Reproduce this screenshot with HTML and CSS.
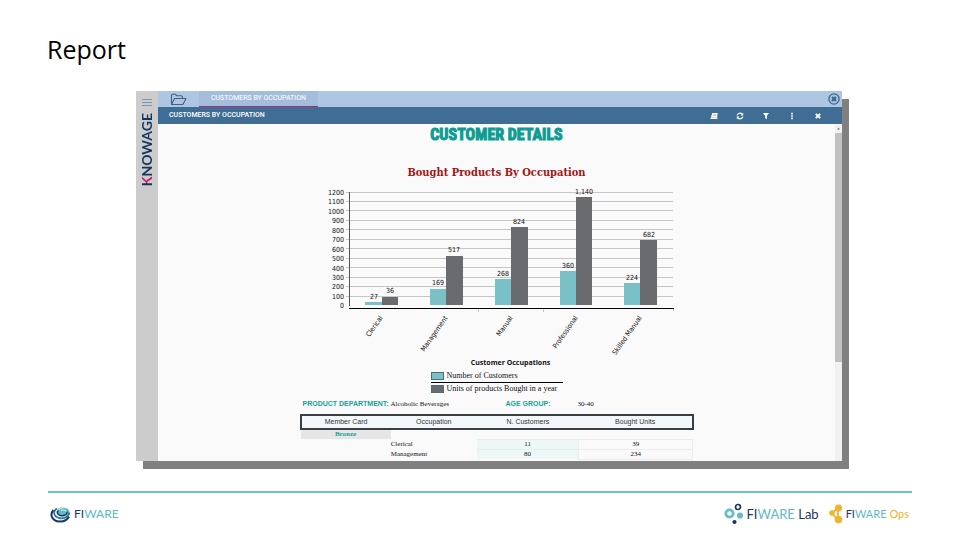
FILE: index.html
```html
<!DOCTYPE html>
<html lang="en">
<head>
<meta charset="utf-8">
<meta name="viewport" content="width=device-width, initial-scale=1">
<title>Report</title>
<link rel="stylesheet" href="styles.css">
</head>
<body>
<main class="slide">
  <h1 class="slide-title">Report</h1>

  <section class="window">
    <nav class="rail">
      <button class="icon-button" type="button" aria-label="Menu">
        <svg width="10" height="9" viewBox="0 0 10 9"><path d="M0 1.5h10M0 4.5h10M0 7.5h10" stroke="#7b97b2" stroke-width="1"/></svg>
      </button>
      <div class="brand"><span class="brand-k">K</span>NOWAGE</div>
    </nav>

    <div class="workspace">
      <div class="tabs">
        <button class="icon-button folder" type="button" aria-label="Open folder">
          <svg width="17" height="13" viewBox="0 0 17 13" fill="none" stroke="#3f6286" stroke-width="1.1" stroke-linejoin="round"><path d="M1.5 11.5V2.2L2.4 1.2H5.6L6.6 2.8H11.6L12.4 3.6V5.5M1.5 11.5L4.6 5.5H16L12.9 11.5Z"/></svg>
        </button>
        <button class="tab" type="button">CUSTOMERS BY OCCUPATION</button>
        <button class="icon-button close-all" type="button" aria-label="Close all">
          <svg width="12" height="12" viewBox="0 0 12 12" fill="none" stroke="#3b668f"><circle cx="6" cy="6" r="5.1" stroke-width="1.3"/><path d="M4 4L8 8M8 4L4 8" stroke-width="2.2"/></svg>
        </button>
      </div>

      <header class="toolbar">
        <h2 class="toolbar-title">CUSTOMERS BY OCCUPATION</h2>
        <div class="actions">
          <button class="icon-button" type="button" aria-label="Online help">
            <svg width="8" height="8" viewBox="0 0 8 8"><path d="M2.2 1H7.8L6.6 5.2H1Z M.8 5.4H6.6L7.3 2.6V6.9H1Q-.1 6.2 .8 5.4Z" fill="#fff"/><path d="M3.3 2.4h2.8M3 3.6h2.8" stroke="#406d93" stroke-width=".4"/></svg>
          </button>
          <button class="icon-button" type="button" aria-label="Refresh">
            <svg width="8" height="8" viewBox="0 0 8 8" fill="none" stroke="#fff" stroke-width="1.2"><path d="M1.2 3.4A2.8 2.8 0 0 1 6 2M6.8 4.6A2.8 2.8 0 0 1 2 6"/><path d="M7.2 .7V3.4H4.5ZM.8 7.3V4.6H3.5Z" fill="#fff" stroke="none"/></svg>
          </button>
          <button class="icon-button" type="button" aria-label="Filter">
            <svg width="8" height="8" viewBox="0 0 8 8"><path d="M1 1H7L4.9 3.8V7.2L3.1 6V3.8Z" fill="#fff"/></svg>
          </button>
          <button class="icon-button" type="button" aria-label="More">
            <svg width="8" height="8" viewBox="0 0 8 8"><path d="M3.2 .8h1.6v1.6H3.2ZM3.2 3.2h1.6v1.6H3.2ZM3.2 5.6h1.6v1.6H3.2Z" fill="#fff"/></svg>
          </button>
          <button class="icon-button" type="button" aria-label="Close">
            <svg width="8" height="8" viewBox="0 0 8 8"><path d="M1.8 1.8L6.2 6.2M6.2 1.8L1.8 6.2" stroke="#fff" stroke-width="1.9"/></svg>
          </button>
        </div>
      </header>

      <div class="viewport">
        <article class="report">
          <h3 class="report-title">CUSTOMER DETAILS</h3>
          <h4 class="chart-title">Bought Products By Occupation</h4>

          <svg class="chart" viewBox="0 0 394 172" role="img" aria-label="Bought Products By Occupation">
            <path class="grid" d="M46 8.5H373M46 17.5H373M46 26.5H373M46 36.5H373M46 45.5H373M46 55.5H373M46 64.5H373M46 74.5H373M46 83.5H373M46 93.5H373M46 102.5H373M46 112.5H373"/>
            <path class="axis-y" d="M49.5 8V122"/>
            <path class="axis-x" d="M49 124.5H374"/>
            <path class="grid" d="M178.5 125v3M243.5 125v3M373.5 125v2"/>
            <g class="tick">
              <text x="44" y="11">1200</text><text x="44" y="20">1100</text><text x="44" y="30">1000</text>
              <text x="44" y="39">900</text><text x="44" y="49">800</text><text x="44" y="58">700</text>
              <text x="44" y="68">600</text><text x="44" y="77">500</text><text x="44" y="87">400</text>
              <text x="44" y="96">300</text><text x="44" y="105">200</text><text x="44" y="115">100</text>
              <text x="44" y="124">0</text>
            </g>
            <g class="bar-customers">
              <rect x="65" y="118" width="17" height="3"/><rect x="130" y="105" width="16" height="16"/>
              <rect x="195" y="95" width="16" height="26"/><rect x="260" y="87" width="16" height="34"/>
              <rect x="324" y="99" width="16" height="22"/>
            </g>
            <g class="bar-units">
              <rect x="82" y="113" width="16" height="8"/><rect x="146" y="72" width="17" height="49"/>
              <rect x="211" y="43" width="17" height="78"/><rect x="276" y="13" width="16" height="108"/>
              <rect x="340" y="56" width="17" height="65"/>
            </g>
            <g class="value">
              <text x="74" y="115">27</text><text x="90" y="109">36</text>
              <text x="138" y="101">169</text><text x="154" y="68">517</text>
              <text x="203" y="92">268</text><text x="219" y="40">824</text>
              <text x="268" y="84">360</text><text x="284" y="10">1,140</text>
              <text x="332" y="96">224</text><text x="349" y="53">682</text>
            </g>
            <g class="category">
              <text transform="translate(83 134) rotate(-55)">Clerical</text>
              <text transform="translate(148 134) rotate(-55)">Management</text>
              <text transform="translate(213 134) rotate(-55)">Manual</text>
              <text transform="translate(278 134) rotate(-55)">Professional</text>
              <text transform="translate(342 134) rotate(-55)">Skilled Manual</text>
            </g>
          </svg>

          <p class="axis-title">Customer Occupations</p>
          <ul class="legend">
            <li><span class="swatch customers"></span>Number of Customers</li>
            <li><span class="swatch units"></span>Units of products Bought in a year</li>
          </ul>

          <dl class="params">
            <dt>PRODUCT DEPARTMENT:</dt><dd>Alcoholic Beverages</dd>
            <dt>AGE GROUP:</dt><dd>30-40</dd>
          </dl>

          <table class="details">
            <colgroup><col class="c1"><col class="c2"><col class="c3"><col class="c4"></colgroup>
            <thead>
              <tr><th>Member Card</th><th>Occupation</th><th>N. Customers</th><th>Bought Units</th></tr>
            </thead>
            <tbody>
              <tr class="group"><th>Bronze</th><td></td><td></td><td></td></tr>
              <tr><td></td><td>Clerical</td><td class="tint">11</td><td class="units-cell">39</td></tr>
              <tr><td></td><td>Management</td><td class="tint">80</td><td class="units-cell">234</td></tr>
            </tbody>
          </table>
        </article>

        <div class="scrollbar">
          <svg width="7" height="9" viewBox="0 0 7 9"><path d="M2 5.500L3.500 3.500L5 5.500Z" fill="#777"/></svg>
          <div class="thumb"></div>
        </div>
      </div>
    </div>
  </section>

  <footer class="footer">
    <div class="logo">
      <svg width="21" height="17" viewBox="0 0 21 17" fill="none">
        <ellipse cx="13" cy="6" rx="6.500" ry="4.700" fill="#63b9c8"/>
        <path d="M11 4.500C14 3 18 5 16 8C14 11 8 10.500 7.500 7C7.500 3 13 .5 17 2" stroke="#fff" stroke-width=".8"/>
        <path d="M7 2.500C2.500 5 3.500 10.500 9 12C14 13.200 19 10.500 19.500 6.500" stroke="#2b7c9c" stroke-width="1.800"/>
        <path d="M3.500 4C-1 9 2.500 15 9.500 15.500C14 15.700 17.500 13.500 19 10.500" stroke="#1b3564" stroke-width="2"/>
        <path d="M8.500 4.500C6 7 8.500 10 12.500 9.700C15.500 9.400 17.500 7.500 17 5.500" stroke="#1b3564" stroke-width="1.500"/>
      </svg>
      <span class="wordmark"><b>FI</b>WARE</span>
    </div>
    <div class="logo-group">
      <div class="logo">
        <svg width="20" height="22" viewBox="0 0 20 22" fill="none">
          <circle cx="5.500" cy="10.500" r="3.700" stroke="#65bdc8" stroke-width="2.800"/>
          <circle cx="14" cy="4" r="2.500" stroke="#1b3564" stroke-width="1.700"/>
          <circle cx="16" cy="12.500" r="3.100" fill="#65bdc8"/>
          <circle cx="10.500" cy="19" r="2.100" fill="#1b3564"/>
        </svg>
        <span class="wordmark large"><b>FI</b>WARE <b>Lab</b></span>
      </div>
      <div class="logo">
        <svg width="14" height="20" viewBox="0 0 14 20">
          <path d="M3 9L9 4V16Z" fill="none" stroke="#f1b22d" stroke-width="1.800"/>
          <circle cx="3" cy="9" r="2.800" fill="#f1b22d"/><circle cx="9.500" cy="4" r="3.500" fill="#f1b22d"/><circle cx="9.500" cy="15.500" r="3.800" fill="#f1b22d"/>
        </svg>
        <span class="wordmark small"><b>FI</b>WARE <i>Ops</i></span>
      </div>
    </div>
  </footer>
</main>
</body>
</html>
```

FILE: styles.css
```css
* { box-sizing: border-box; }

body {
  margin: 0;
  background: #fff;
  color: #111;
  font-family: "Liberation Sans", sans-serif;
}

h1, h2, h3, h4, p, ul, dl, dd { margin: 0; padding: 0; }

button {
  border: 0;
  padding: 0;
  background: none;
  font: inherit;
  color: inherit;
}

.slide {
  min-height: 100vh;
  display: flex;
  flex-direction: column;
}

.slide-title {
  padding: 31px 47px 24px;
  font: 400 25px/36px "Open Sans", sans-serif;
  color: #000;
}

.window {
  display: flex;
  margin: 0 118px 0 136px;
  background: #fafafa;
  box-shadow: 7px 8px 0 #808080;
}

.rail {
  flex: 0 0 22px;
  display: flex;
  flex-direction: column;
  align-items: center;
  gap: 6px;
  padding-top: 7px;
  background: #ccc;
}

.icon-button { display: flex; }

.brand {
  writing-mode: vertical-rl;
  transform: rotate(180deg);
  font: 700 14px/20px Lato, sans-serif;
  color: #17365d;
}

.brand-k {
  background: linear-gradient(to bottom, #17365d 3px, #d3136a 3px);
  background-clip: text;
  -webkit-background-clip: text;
  color: transparent;
}

.workspace { flex: 1; min-width: 0; }

.tabs {
  display: flex;
  align-items: center;
  height: 16px;
  padding: 0 2px 0 12px;
  background: #aec6e1;
}

.folder { margin-right: 12px; }

.tab {
  height: 16px;
  padding: 0 12px;
  border-bottom: 1px solid #a52d7d;
  background: #a4bddb;
  font: 400 7px/15px Roboto, sans-serif;
  color: #fff;
}

.close-all { margin-left: auto; }

.toolbar {
  display: flex;
  align-items: center;
  justify-content: space-between;
  height: 17px;
  padding: 0 20px 0 11px;
  background: #406d93;
}

.toolbar-title {
  font: 500 7px/17px Roboto, sans-serif;
  color: #fff;
}

.actions { display: flex; gap: 18px; }

.viewport {
  display: flex;
  height: 337px;
  overflow: hidden;
}

.report {
  flex: 0 1 394px;
  margin: 0 auto;
}

.report-title {
  font: 700 16px/22px "Roboto Condensed", "Open Sans Condensed", "DejaVu Sans Condensed", sans-serif;
  -webkit-text-stroke: 1px #0c9c94;
  color: #0c9c94;
  text-align: center;
}

.chart-title {
  padding: 18px 0 2px;
  font: 700 11px/18px "DejaVu Serif Condensed", "DejaVu Serif", serif;
  color: #a31515;
  text-align: center;
  white-space: nowrap;
}

.chart {
  display: block;
  width: 100%;
  overflow: visible;
}

.grid { stroke: #c6c6c6; }
.axis-y { stroke: #555; }
.axis-x { stroke: #000; stroke-width: 1; }
.bar-customers { fill: #7ac1c7; }
.bar-units { fill: #696b6f; }

.tick, .value, .category {
  font: 400 7px "DejaVu Sans Condensed", "DejaVu Sans", sans-serif;
  fill: #111;
}

.tick, .category { text-anchor: end; }
.value { text-anchor: middle; }

.axis-title {
  padding-left: 28px;
  font: 700 7px/14px "Open Sans", sans-serif;
  text-align: center;
}

.legend {
  width: 132px;
  margin: 0 auto;
  list-style: none;
  font: 400 8px/12px "Liberation Serif", serif;
  white-space: nowrap;
}

.legend li {
  display: flex;
  align-items: center;
  gap: 3px;
}

.legend li + li { border-top: 1px solid #000; }

.swatch {
  width: 13px;
  height: 8px;
  border: 1px solid #4b6f75;
}

.customers { background: #7ac1c7; }
.units { background: #696b6f; }

.params {
  display: grid;
  grid-template-columns: 88px 115px 72px 1fr;
  padding: 3px 0 4px 3px;
  font: 400 7px/12px "Liberation Serif", serif;
  white-space: nowrap;
}

.params dt {
  font: 700 7px/12px "Liberation Sans", sans-serif;
  color: #1c9f98;
}

.details {
  width: 100%;
  border-collapse: collapse;
  table-layout: fixed;
  font: 400 7px/9px "Liberation Serif", serif;
}

.c1 { width: 23%; }
.c2 { width: 22%; }
.c3 { width: 26%; }
.c4 { width: 29%; }

.details th, .details td {
  height: 10px;
  padding: 0;
}

.details thead tr { border: 2px solid #3c3f41; }

.details thead th {
  height: 14px;
  background: #f3f9fb;
  font: 400 7px/10px "Liberation Sans", sans-serif;
  color: #333;
}

.group th {
  background: #e6e6e6;
  color: #1c9f98;
}

.details .tint {
  background: #edf7f8;
  border-top: 1px solid #e3eeee;
  text-align: center;
}

.details .units-cell {
  border: 1px solid #ececec;
  text-align: center;
}

.scrollbar {
  flex: 0 0 7px;
  display: flex;
  flex-direction: column;
  background: #f1f1f1;
}

.thumb {
  height: 229px;
  background: #c1c1c1;
}

.footer {
  display: flex;
  align-items: center;
  justify-content: space-between;
  margin: 30px 48px 0;
  padding-top: 10px;
  border-top: 2px solid #6ac3cd;
}

.logo {
  display: flex;
  align-items: center;
  gap: 3px;
  padding-left: 2px;
}

.logo-group {
  display: flex;
  align-items: center;
  gap: 8px;
  padding-right: 3px;
}

.wordmark {
  font: 400 12px/16px Lato, sans-serif;
  color: #62b8c6;
  white-space: nowrap;
}

.wordmark b { font-weight: 400; color: #1b3564; }
.wordmark i { font-style: normal; color: #f1b22d; }
.large { font-size: 13px; }
.small { font-size: 11px; }
```
